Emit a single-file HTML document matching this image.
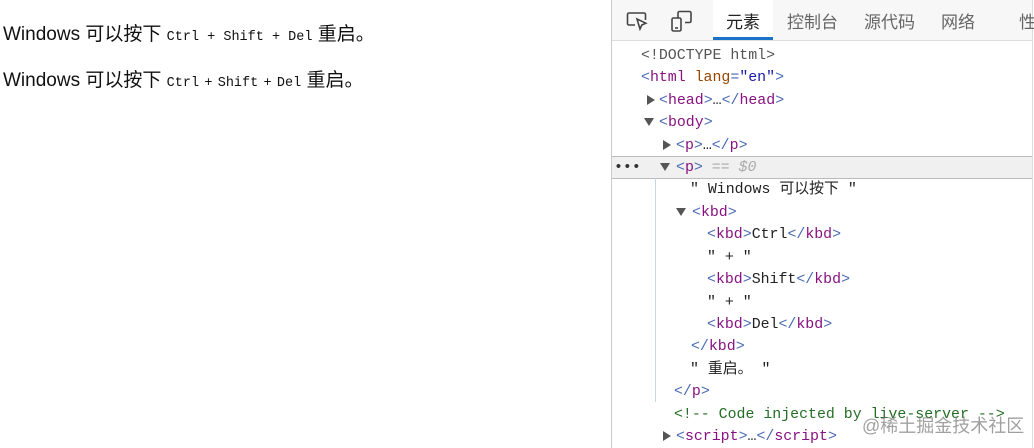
<!DOCTYPE html>
<html><head><style>
body{margin:0;width:1034px;height:448px;overflow:hidden;background:#fff;position:relative;font-family:"Liberation Sans","Noto Sans CJK SC",sans-serif}
.p{position:absolute;left:3px;font-size:19px;color:#111;white-space:nowrap}
.p kbd,.p .s{font-family:"Liberation Mono",monospace;font-size:13.5px}
#dt{position:absolute;left:611px;top:0;width:420px;height:448px;border-left:1px solid #ccc;border-right:1px solid #ddd;background:#fff}
#tb{position:absolute;left:0;top:0;width:420px;height:40px;background:#f7f7f7;border-bottom:1px solid #ddd}
.tab{position:absolute;top:8px;font-size:17px;color:#666;font-family:"Liberation Sans","Noto Sans CJK SC",sans-serif}
.l{position:absolute;font-family:"Liberation Mono","Noto Sans CJK SC",monospace;font-size:14.9px;white-space:nowrap;color:#222;line-height:18px}
.t{color:#881280}.b{color:#4a6ab5}.a{color:#994500}.v{color:#1a1aa6}.c{color:#236e25}.g{color:#999}
.tri{position:absolute;width:0;height:0}
.r{border-top:5px solid transparent;border-bottom:5px solid transparent;border-left:8px solid #555}
.d{border-left:5px solid transparent;border-right:5px solid transparent;border-top:8px solid #555}
</style></head><body>
<div class="p" style="top:19px">Windows 可以按下 <kbd>Ctrl + Shift + Del</kbd> 重启。</div>
<div class="p" style="top:65px">Windows 可以按下 <kbd>Ctrl</kbd> <span class="s">+</span> <kbd>Shift</kbd> <span class="s">+</span> <kbd>Del</kbd> 重启。</div>
<div id="dt">
<div id="tb">
<svg style="position:absolute;left:14px;top:11px" width="24" height="20" viewBox="0 0 24 20" fill="none" stroke="#444" stroke-width="1.6"><path d="M9 14H3a1.5 1.5 0 0 1-1.5-1.5v-9A1.5 1.5 0 0 1 3 2h15a1.5 1.5 0 0 1 1.5 1.5V9"/><path d="M11 8l3 10 1.8-4 4-1.8z" fill="#fff"/></svg>
<svg style="position:absolute;left:58px;top:10px" width="24" height="22" viewBox="0 0 24 22" fill="none" stroke="#444" stroke-width="1.6"><path d="M8 8V3a1.5 1.5 0 0 1 1.5-1.5h10A1.5 1.5 0 0 1 21 3v8a1.5 1.5 0 0 1-1.5 1.5H15"/><rect x="2" y="8" width="9" height="13" rx="1.5"/><path d="M5 18h3"/></svg>
<div style="position:absolute;left:101px;top:0;width:60px;height:40px;background:#fff"></div>
<div style="position:absolute;left:101px;top:37px;width:60px;height:3px;background:#1a73c8"></div>
<div class="tab" style="left:114px;color:#222">元素</div>
<div class="tab" style="left:175px">控制台</div>
<div class="tab" style="left:252px">源代码</div>
<div class="tab" style="left:329px">网络</div>
<div class="tab" style="left:407px">性</div>
</div>
<div style="position:absolute;left:0;top:156px;width:420px;height:21px;background:#f0f0f0;border-top:1px solid #bbb;border-bottom:1px solid #bbb"></div>
<div style="position:absolute;left:43px;top:178px;width:1px;height:224px;background:#c5d6ea"></div>
<div class="l g" style="left:2px;top:159px;color:#333">•••</div>
<div class="l g" style="left:29px;top:47px;color:#555">&lt;!DOCTYPE html&gt;</div>
<div class="l" style="left:29px;top:69px"><span class="b">&lt;</span><span class="t">html</span> <span class="a">lang</span><span class="b">=</span><span class="v">"en"</span><span class="b">&gt;</span></div>
<div class="tri r" style="left:35px;top:95px"></div>
<div class="l" style="left:47px;top:92px"><span class="b">&lt;</span><span class="t">head</span><span class="b">&gt;</span>…<span class="b">&lt;/</span><span class="t">head</span><span class="b">&gt;</span></div>
<div class="tri d" style="left:32px;top:118px"></div>
<div class="l" style="left:47px;top:114px"><span class="b">&lt;</span><span class="t">body</span><span class="b">&gt;</span></div>
<div class="tri r" style="left:51px;top:140px"></div>
<div class="l" style="left:64px;top:137px"><span class="b">&lt;</span><span class="t">p</span><span class="b">&gt;</span>…<span class="b">&lt;/</span><span class="t">p</span><span class="b">&gt;</span></div>
<div class="tri d" style="left:48px;top:163px"></div>
<div class="l" style="left:64px;top:159px"><span class="b">&lt;</span><span class="t">p</span><span class="b">&gt;</span> <span class="g" style="font-style:italic;color:#aaa">== $0</span></div>
<div class="l" style="left:78px;top:181px">" Windows 可以按下 "</div>
<div class="tri d" style="left:64px;top:208px"></div>
<div class="l" style="left:80px;top:204px"><span class="b">&lt;</span><span class="t">kbd</span><span class="b">&gt;</span></div>
<div class="l" style="left:95px;top:226px"><span class="b">&lt;</span><span class="t">kbd</span><span class="b">&gt;</span>Ctrl<span class="b">&lt;/</span><span class="t">kbd</span><span class="b">&gt;</span></div>
<div class="l" style="left:95px;top:249px">" + "</div>
<div class="l" style="left:95px;top:271px"><span class="b">&lt;</span><span class="t">kbd</span><span class="b">&gt;</span>Shift<span class="b">&lt;/</span><span class="t">kbd</span><span class="b">&gt;</span></div>
<div class="l" style="left:95px;top:294px">" + "</div>
<div class="l" style="left:95px;top:316px"><span class="b">&lt;</span><span class="t">kbd</span><span class="b">&gt;</span>Del<span class="b">&lt;/</span><span class="t">kbd</span><span class="b">&gt;</span></div>
<div class="l" style="left:79px;top:338px"><span class="b">&lt;/</span><span class="t">kbd</span><span class="b">&gt;</span></div>
<div class="l" style="left:78px;top:361px">" 重启。 "</div>
<div class="l" style="left:62px;top:383px"><span class="b">&lt;/</span><span class="t">p</span><span class="b">&gt;</span></div>
<div class="l c" style="left:62px;top:406px">&lt;!-- Code injected by live-server --&gt;</div>
<div class="tri r" style="left:51px;top:431px"></div>
<div class="l" style="left:64px;top:428px"><span class="b">&lt;</span><span class="t">script</span><span class="b">&gt;</span>…<span class="b">&lt;/</span><span class="t">script</span><span class="b">&gt;</span></div>
<div style="position:absolute;left:250px;top:412px;font-size:18px;color:rgba(120,120,120,0.7);font-family:'Liberation Sans','Noto Sans CJK SC',sans-serif">@稀土掘金技术社区</div>
</div>
</body></html>
